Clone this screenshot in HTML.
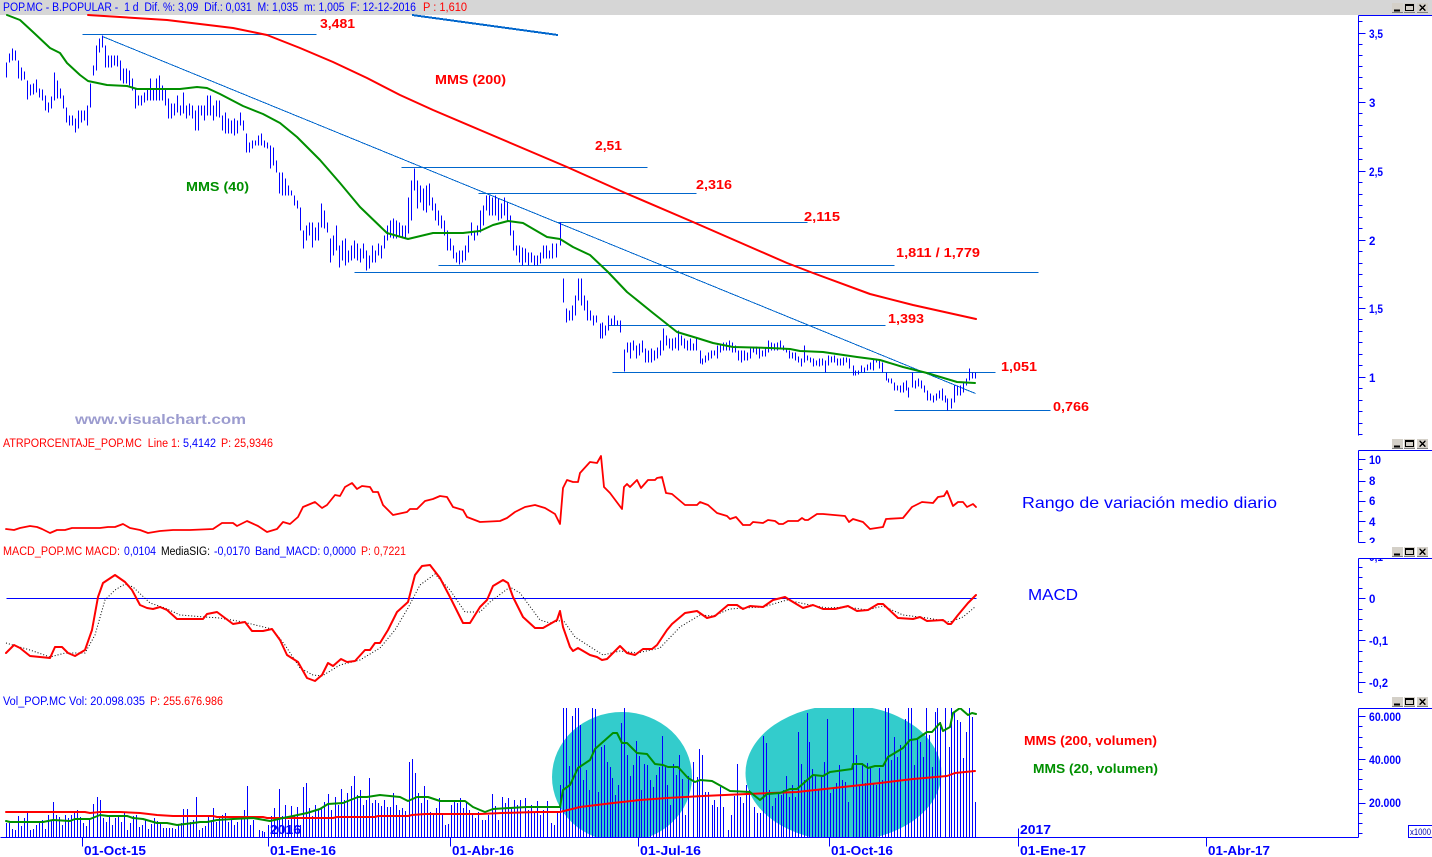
<!DOCTYPE html>
<html><head><meta charset="utf-8"><title>POP.MC</title>
<style>
html,body{margin:0;padding:0;background:#fff;overflow:hidden}
svg{display:block;position:absolute;left:0;top:0}
text{font-family:"Liberation Sans",sans-serif}
.b{font-weight:bold}
.crisp{shape-rendering:crispEdges}
.l{fill:none;stroke-linejoin:round;stroke-linecap:round}
</style></head><body>
<svg width="1432" height="857" viewBox="0 0 1432 857" xmlns="http://www.w3.org/2000/svg">
<defs>
<clipPath id="vc"><rect x="0" y="708" width="1358" height="129"/></clipPath>
<clipPath id="atrc"><rect x="1360" y="450" width="72" height="93"/></clipPath>
<clipPath id="macc"><rect x="1360" y="558" width="72" height="136"/></clipPath>
<g id="btn"><rect x="1392" y="1" width="11" height="10" fill="#d4d0c8"/><rect x="1404" y="1" width="11" height="10" fill="#d4d0c8"/><rect x="1417" y="1" width="11" height="10" fill="#d4d0c8"/><path d="M1392 10.5H1403M1404 10.5H1415M1417 10.5H1428" stroke="#808080" fill="none"/><path d="M1394 8H1400M1394 9H1400" stroke="#000" stroke-width="1" fill="none"/><rect x="1405.5" y="2.5" width="8" height="6" fill="none" stroke="#000"/><path d="M1405 3.5H1414" stroke="#000" fill="none"/><path d="M1419.5 3L1425.5 8.5M1425.5 3L1419.5 8.5" stroke="#000" stroke-width="1.4" fill="none"/></g>
</defs>
<rect width="1432" height="857" fill="#fff"/>
<rect x="0" y="0" width="1432" height="15" fill="#d6d6d6"/>
<text x="3" y="11" font-size="11.5" fill="#0000ff" textLength="413" lengthAdjust="spacingAndGlyphs" xml:space="preserve">POP.MC - B.POPULAR -  1 d  Dif. %: 3,09  Dif.: 0,031  M: 1,035  m: 1,005  F: 12-12-2016</text>
<text x="423" y="11" font-size="11.5" fill="#ff0000" textLength="44" lengthAdjust="spacingAndGlyphs">P : 1,610</text>

<!-- horizontal and trend lines -->
<g stroke="#0066cc" stroke-width="1" class="crisp" fill="none" transform="translate(.5,.5)">
<path d="M82 34H316M401 167H647M478 193H696M556 222H807M438 265H894M354 272H1038M608 325H885M612 372H995M894 410H1050"/>
<path d="M102 36L975 393"/>
</g>
<path d="M412 15L558 35" stroke="#0066cc" stroke-width="2" fill="none" class="crisp"/>

<!-- price bars -->
<path class="crisp" transform="translate(.5,.5)" stroke="#0000ff" stroke-width="1" fill="none" d="M6 62V77M9 53V62M12 48V60M15 50V60M18 60V78M21 67V80M24 71V79M27 80V99M30 84V95M33 83V94M36 79V92M39 88V97M42 89V100M45 95V110M48 102V112M51 96V108M54 72V100M57 80V98M60 88V98M63 95V108M66 107V122M69 115V125M72 115V125M75 118V132M78 110V128M81 110V122M84 110V120M87 105V125M90 83V107M93 65V75M96 45V70M99 38V52M102 35V47M105 45V67M108 55V67M111 55V67M114 55V65M117 55V66M120 60V80M123 68V83M126 68V83M129 70V85M132 78V90M135 88V108M138 95V105M141 95V105M144 92V102M147 88V100M150 78V100M153 88V100M156 78V100M159 75V100M162 85V100M165 88V105M168 98V118M171 103V118M174 103V115M177 95V112M180 105V115M183 92V113M186 105V118M189 103V115M192 105V118M195 110V130M198 105V130M201 105V115M204 105V120M207 95V115M210 95V115M213 105V120M216 100V116M219 100V117M222 115V130M225 112V133M228 118V133M231 120V133M234 118V135M237 120V133M240 112V125M243 120V130M246 133V152M249 142V152M252 140V148M255 140V145M258 135V145M261 133V145M264 140V147M267 142V148M270 145V168M273 147V165M276 160V172M279 172V193M282 172V195M285 178V195M288 185V195M291 190V195M294 195V205M297 200V208M300 207V230M303 230V248M306 225V240M309 222V235M312 222V247M315 227V240M318 222V240M321 203V227M324 210V228M327 222V232M330 238V262M333 235V255M336 225V250M339 245V267M342 240V260M345 238V265M348 250V262M351 245V260M354 240V258M357 243V260M360 248V262M363 243V258M366 250V270M369 255V268M372 245V262M375 250V262M378 243V255M381 245V258M384 235V248M387 225V240M390 220V237M393 218V238M396 220V238M399 222V236M402 225V238M405 225V238M408 197V233M411 180V220M414 168V190M417 180V208M420 185V202M423 188V210M426 185V212M429 183V205M432 197V210M435 203V220M438 210V225M441 215V228M444 220V235M447 230V250M450 238V250M453 245V258M456 252V262M459 250V264M462 250V262M465 245V260M468 235V252M471 222V235M474 230V240M477 225V235M480 210V232M483 205V225M486 195V210M489 195V215M492 197V215M495 195V215M498 198V220M501 203V218M504 197V215M507 202V220M510 215V235M513 230V250M516 245V255M519 245V262M522 247V265M525 248V262M528 252V265M531 252V262M534 255V265M537 255V265M540 252V263M543 245V258M546 245V258M549 250V258M552 243V258M556 243V257M560 222V245M563 278V302M566 308V322M569 310V320M572 305V320M575 295V315M578 278V300M581 278V305M584 295V310M587 300V320M590 310V320M593 315V325M596 315V322M600 323V338M602 322V338M605 325V335M608 315V330M611 318V325M614 315V325M617 320V325M620 320V332M624 349V371M627 342V352M630 342V358M633 340V350M636 345V358M639 343V355M642 340V352M645 348V362M648 350V362M651 348V362M654 350V360M657 347V358M660 340V355M663 328V350M666 335V345M669 338V348M672 338V350M675 337V348M678 330V350M681 335V345M684 338V348M687 340V350M690 338V350M693 343V350M696 337V350M700 350V363M702 358V364M705 355V362M708 352V360M711 350V358M714 350V355M717 345V358M720 343V352M723 342V350M726 342V350M729 340V350M732 342V352M735 345V352M738 350V360M741 350V362M744 350V360M747 352V360M750 348V358M753 348V352M756 346V354M759 348V358M762 350V356M765 348V356M768 340V352M771 342V350M774 343V350M777 342V350M780 340V348M783 345V350M786 348V352M789 350V358M792 352V358M795 352V360M798 356V362M801 358V366M804 345V362M807 355V360M810 357V362M813 358V366M816 360V365M819 358V366M822 358V365M825 360V372M828 355V365M831 356V362M834 355V362M837 358V365M840 358V365M843 357V365M846 357V362M849 358V368M853 365V375M855 370V375M858 370V374M861 365V372M864 367V372M867 364V370M870 362V369M873 358V370M876 358V362M879 360V368M882 362V372M886 372V380M888 378V382M891 378V383M894 382V390M897 385V390M900 385V392M903 382V392M906 380V390M908 387V397M912 372V387M915 380V388M918 378V386M921 380V388M924 385V392M927 390V400M930 393V400M933 395V402M936 393V400M939 390V398M942 388V400M945 395V402M947 398V410M951 398V408M954 385V402M957 385V395M960 385V395M963 382V392M966 378V385M969 368V380M972 372V378M975 372V378"/>

<!-- MMS 200 & 40 -->
<polyline class="l" stroke="#ff0000" stroke-width="2" points="88,15 167,20 233,28 267,35 300,48 333,62 367,78 400,95 433,110 480,130 527,150 567,167 623,192 693,222 787,263 813,273 870,294 913,305 976,319"/>
<polyline class="l" stroke="#008f00" stroke-width="2" points="7,15 20,20 33,32 50,48 60,53 67,63 80,75 88,81 107,85 127,86 137,89 170,89 180,89 197,87 207,88 220,94 243,106 263,114 280,123 297,137 320,160 340,183 360,207 387,233 408,239 433,233 463,233 480,231 493,225 508,221 523,223 547,237 560,239 573,247 590,255 608,272 627,292 653,313 677,332 697,338 713,343 733,347 770,348 790,349 800,351 823,352 857,357 880,360 903,367 927,373 957,382 975,383"/>

<!-- main labels -->
<g class="b" font-size="12.5" fill="#ff0000">
<text x="320" y="28" textLength="35" lengthAdjust="spacingAndGlyphs">3,481</text>
<text x="435" y="84" textLength="71" lengthAdjust="spacingAndGlyphs">MMS (200)</text>
<text x="595" y="150" textLength="27" lengthAdjust="spacingAndGlyphs">2,51</text>
<text x="696" y="189" textLength="36" lengthAdjust="spacingAndGlyphs">2,316</text>
<text x="804" y="221" textLength="36" lengthAdjust="spacingAndGlyphs">2,115</text>
<text x="896" y="257" textLength="84" lengthAdjust="spacingAndGlyphs">1,811 / 1,779</text>
<text x="888" y="323" textLength="36" lengthAdjust="spacingAndGlyphs">1,393</text>
<text x="1001" y="371" textLength="36" lengthAdjust="spacingAndGlyphs">1,051</text>
<text x="1053" y="411" textLength="36" lengthAdjust="spacingAndGlyphs">0,766</text>
</g>
<text class="b" x="186" y="191" font-size="12.5" fill="#008f00" textLength="63" lengthAdjust="spacingAndGlyphs">MMS (40)</text>
<text class="b" x="75" y="424" font-size="14" fill="#9c9ccf" textLength="171" lengthAdjust="spacingAndGlyphs">www.visualchart.com</text>

<!-- ATR -->
<g font-size="11.5">
<text x="3" y="447" fill="#ff0000" textLength="177" lengthAdjust="spacingAndGlyphs" xml:space="preserve">ATRPORCENTAJE_POP.MC  Line 1:</text>
<text x="183" y="447" fill="#0000ff" textLength="33" lengthAdjust="spacingAndGlyphs">5,4142</text>
<text x="221" y="447" fill="#ff0000" textLength="52" lengthAdjust="spacingAndGlyphs">P: 25,9346</text>
</g>
<polyline class="l" stroke="#ff0000" stroke-width="1.8" points="6,529 14,530 20,528 30,526 37,527 42,529 50,533 57,530 65,530 72,528 90,528 100,528 108,527 115,527 123,524 130,528 140,530 148,533 160,531 173,530 190,530 213,529 222,523 233,523 237,526 247,521 258,526 267,532 277,529 283,522 290,524 298,517 303,507 315,502 322,508 327,505 335,495 340,496 345,487 352,483 357,489 362,486 370,487 373,492 378,492 383,505 393,515 407,512 410,509 417,509 425,501 433,499 440,496 447,497 453,507 463,510 467,517 480,522 500,521 507,518 515,512 525,507 535,505 545,508 555,514 560,524 563,488 567,480 573,482 578,482 580,473 590,462 597,463 601,456 604,487 610,493 622,509 624,487 627,484 630,487 637,480 641,488 648,480 655,480 657,478 662,477 666,493 672,494 685,505 697,505 700,502 708,505 717,513 727,516 730,519 736,517 743,525 750,525 753,522 763,523 768,520 775,521 779,524 783,524 788,521 798,521 802,518 805,520 808,520 817,514 823,514 845,516 849,522 853,519 863,522 870,529 883,527 886,519 903,518 912,507 922,502 933,503 938,497 944,496 947,491 953,506 958,502 963,502 967,507 973,504 976,507"/>
<text x="1022" y="508" font-size="16" fill="#0000ff" textLength="255" lengthAdjust="spacingAndGlyphs">Rango de variación medio diario</text>

<!-- MACD -->
<g font-size="11.5">
<text x="3" y="555" fill="#ff0000" textLength="117" lengthAdjust="spacingAndGlyphs">MACD_POP.MC MACD:</text>
<text x="124" y="555" fill="#0000ff" textLength="32" lengthAdjust="spacingAndGlyphs">0,0104</text>
<text x="161" y="555" fill="#000000" textLength="49" lengthAdjust="spacingAndGlyphs">MediaSIG:</text>
<text x="214" y="555" fill="#0000ff" textLength="36" lengthAdjust="spacingAndGlyphs">-0,0170</text>
<text x="255" y="555" fill="#0000ff" textLength="101" lengthAdjust="spacingAndGlyphs">Band_MACD: 0,0000</text>
<text x="361" y="555" fill="#ff0000" textLength="45" lengthAdjust="spacingAndGlyphs">P: 0,7221</text>
</g>
<path d="M6 598H976" stroke="#0000ff" stroke-width="1" class="crisp" transform="translate(.5,.5)"/>
<polyline fill="none" stroke="#000" stroke-width="1" stroke-dasharray="1 2" points="6,643 30,650 50,657 65,653 85,653 95,635 105,600 115,590 125,584 133,587 150,603 165,608 180,615 205,617 220,618 243,622 272,629 285,645 300,668 313,675 322,676 340,665 360,660 380,648 395,630 408,608 420,585 435,574 450,590 465,612 480,612 490,602 510,587 520,593 540,620 550,623 563,620 575,637 603,655 620,651 637,653 660,648 680,627 700,615 713,616 730,609 743,608 763,607 787,600 810,605 827,608 847,607 867,610 883,606 903,615 927,618 950,622 963,617 975,607"/>
<polyline class="l" stroke="#ff0000" stroke-width="2" points="6,653 14,645 20,648 30,656 50,658 55,647 62,647 68,653 75,656 85,650 92,630 98,597 103,583 115,575 125,582 132,590 140,605 147,608 153,609 160,607 167,610 177,619 203,619 207,614 217,612 233,624 245,622 252,631 263,631 272,629 280,640 287,655 298,662 307,678 315,681 322,675 328,663 333,666 341,659 347,662 355,661 365,650 370,650 375,643 380,643 388,630 397,612 408,602 415,575 422,566 430,565 440,578 450,597 463,623 470,623 480,607 487,600 493,586 503,580 508,583 513,597 523,617 535,628 543,628 557,620 560,611 563,627 570,647 573,651 578,648 590,655 597,657 602,660 607,659 620,646 627,653 635,655 643,649 652,649 657,645 667,630 672,624 685,613 697,611 707,618 715,616 728,605 737,605 743,609 750,606 763,607 773,600 785,597 793,602 803,608 813,605 823,609 835,609 848,606 857,611 868,610 878,604 883,604 898,618 913,619 920,617 927,621 943,620 948,624 951,624 958,615 968,603 976,595"/>
<text x="1028" y="600" font-size="16" fill="#0000ff" textLength="50" lengthAdjust="spacingAndGlyphs">MACD</text>

<!-- Volume -->
<g font-size="11.5">
<text x="3" y="705" fill="#0000ff" textLength="142" lengthAdjust="spacingAndGlyphs">Vol_POP.MC Vol: 20.098.035</text>
<text x="150" y="705" fill="#ff0000" textLength="73" lengthAdjust="spacingAndGlyphs">P: 255.676.986</text>
</g>
<g clip-path="url(#vc)">
<ellipse cx="622" cy="777" rx="70" ry="65" fill="#33cccc"/>
<ellipse cx="843.5" cy="773" rx="98" ry="68" fill="#33cccc"/>
<path class="crisp" transform="translate(.5,0)" stroke="#0000ff" stroke-width="1" fill="none" d="M6 837V823M9 837V823M12 837V829M15 837V830M18 837V816M21 837V826M24 837V818M27 837V812M30 837V830M33 837V829M36 837V825M39 837V823M42 837V820M45 837V829M48 837V815M51 837V820M53 837V802M56 837V815M59 837V817M62 837V825M65 837V815M68 837V818M71 837V815M74 837V812M77 837V810M80 837V817M83 837V823M86 837V826M89 837V820M93 837V804M97 837V797M100 837V800M103 837V818M106 837V822M109 837V815M112 837V825M115 837V818M118 837V815M121 837V822M124 837V812M127 837V830M130 837V823M133 837V816M136 837V815M139 837V827M142 837V825M145 837V820M148 837V829M151 837V824M154 837V818M157 837V821M160 837V824M163 837V828M166 837V828M169 837V828M172 837V828M175 837V829M178 837V825M181 837V823M183 837V809M187 837V809M190 837V822M193 837V820M196 837V797M199 837V830M202 837V828M205 837V826M208 837V815M211 837V821M213 837V808M216 837V822M219 837V818M222 837V815M225 837V813M228 837V822M231 837V820M234 837V825M237 837V822M241 837V818M244 837V810M247 837V786M250 837V825M253 837V820M259 837V830M262 837V831M264 837V832M268 837V825M271 837V816M274 837V808M277 837V818M279 837V789M282 837V816M285 837V805M288 837V820M291 837V806M294 837V815M297 837V807M300 837V825M303 837V787M306 837V783M309 837V808M312 837V816M315 837V805M318 837V810M321 837V807M324 837V802M328 837V794M331 837V810M335 837V797M338 837V805M341 837V789M344 837V800M347 837V793M351 837V786M354 837V776M357 837V795M360 837V790M363 837V805M366 837V800M369 837V778M372 837V803M375 837V800M378 837V803M381 837V806M384 837V800M387 837V807M390 837V807M393 837V793M396 837V805M399 837V810M402 837V808M405 837V811M409 837V762M412 837V759M415 837V773M418 837V793M421 837V803M424 837V786M427 837V800M430 837V812M433 837V815M436 837V808M439 837V798M442 837V815M445 837V825M448 837V824M451 837V805M454 837V802M457 837V803M460 837V798M463 837V808M466 837V802M469 837V810M472 837V813M475 837V818M478 837V812M482 837V820M485 837V820M488 837V815M492 837V794M495 837V806M498 837V820M502 837V797M505 837V803M508 837V798M511 837V808M514 837V800M517 837V805M520 837V800M525 837V798M528 837V810M531 837V805M534 837V812M537 837V801M540 837V815M543 837V810M547 837V801M551 837V823M554 837V825M557 837V812M560 837V785M563 837V708M566 837V708M569 837V766M572 837V716M575 837V708M578 837V708M580 837V725M583 837V780M586 837V770M589 837V790M592 837V708M595 837V709M598 837V792M601 837V747M604 837V745M607 837V762M610 837V767M612 837V778M615 837V795M618 837V785M621 837V723M624 837V708M627 837V755M630 837V776M633 837V765M636 837V741M639 837V756M641 837V790M644 837V764M647 837V765M650 837V780M653 837V787M656 837V775M659 837V767M662 837V736M665 837V767M667 837V785M670 837V805M673 837V764M676 837V775M679 837V755M682 837V779M685 837V815M688 837V776M693 837V762M697 837V777M699 837V749M702 837V755M705 837V792M708 837V792M712 837V805M714 837V800M717 837V807M720 837V787M723 837V807M728 837V830M731 837V815M734 837V796M737 837V764M740 837V797M743 837V803M746 837V785M749 837V790M754 837V807M757 837V813M760 837V813M763 837V736M766 837V743M769 837V790M772 837V806M775 837V798M778 837V793M781 837V795M783 837V790M786 837V776M789 837V797M792 837V785M795 837V797M798 837V732M801 837V764M804 837V780M807 837V713M809 837V742M812 837V769M815 837V775M818 837V790M821 837V777M824 837V762M827 837V719M830 837V793M833 837V788M836 837V783M839 837V765M842 837V780M845 837V782M848 837V802M853 837V708M856 837V755M859 837V785M862 837V763M865 837V783M867 837V763M870 837V768M873 837V783M876 837V785M879 837V768M882 837V780M885 837V708M888 837V708M891 837V760M894 837V737M897 837V757M900 837V745M905 837V719M908 837V708M911 837V708M914 837V765M917 837V738M920 837V742M923 837V757M926 837V708M929 837V735M932 837V767M935 837V712M937 837V708M940 837V722M945 837V708M949 837V747M951 837V708M954 837V712M957 837V720M960 837V722M963 837V758M966 837V732M969 837V708M972 837V717M975 837V802"/>
<polyline class="l" stroke="#ff0000" stroke-width="2" points="6,812 85,812 90,813 100,812 120,812 140,813 157,815 173,816 213,816 217,817 263,817 267,818 333,818 337,817 375,817 378,816 408,816 412,815 425,814 480,814 502,813 537,812 560,812 580,807 613,803 640,800 667,798 703,796 747,794 797,792 843,787 880,783 913,779 947,776 955,773 975,771"/>
<polyline class="l" stroke="#008f00" stroke-width="2" points="6,821 10,822 43,822 53,820 70,821 75,819 90,819 100,815 108,816 127,816 133,818 143,819 157,823 167,823 177,825 193,823 200,822 207,822 217,820 233,819 253,818 270,821 283,818 293,816 307,813 320,809 328,804 343,803 358,797 367,797 380,795 400,797 408,801 417,797 428,797 440,801 465,801 473,807 480,810 485,812 493,809 510,808 527,807 560,807 563,790 570,785 578,768 590,760 595,749 613,733 617,733 622,743 627,743 637,753 647,754 655,764 663,765 668,767 678,767 688,778 695,782 700,780 712,781 730,791 750,792 760,800 767,794 780,793 790,789 797,789 813,775 823,776 830,772 852,769 853,764 862,764 868,768 875,766 883,766 888,757 903,748 910,740 917,739 927,732 932,732 940,723 943,731 950,727 953,713 960,708 968,715 972,713 976,714"/>
</g>
<path d="M0 837H1358" stroke="#0000ff" stroke-width="1" class="crisp" transform="translate(.5,.5)"/>
<g class="b" font-size="12.5">
<text x="1024" y="745" fill="#ff0000" textLength="133" lengthAdjust="spacingAndGlyphs">MMS (200, volumen)</text>
<text x="1033" y="773" fill="#008f00" textLength="125" lengthAdjust="spacingAndGlyphs">MMS (20, volumen)</text>
</g>

<!-- date axis -->
<path class="crisp" transform="translate(.5,.5)" stroke="#0000ff" stroke-width="1" d="M82 837V846M268 828V846M450 837V846M638 837V846M829 837V846M1018 828V846M1206 837V846"/>
<g class="b" font-size="12.5" fill="#0000ff">
<text x="84" y="855" textLength="62" lengthAdjust="spacingAndGlyphs">01-Oct-15</text>
<text x="270" y="855" textLength="66" lengthAdjust="spacingAndGlyphs">01-Ene-16</text>
<text x="452" y="855" textLength="62" lengthAdjust="spacingAndGlyphs">01-Abr-16</text>
<text x="640" y="855" textLength="61" lengthAdjust="spacingAndGlyphs">01-Jul-16</text>
<text x="831" y="855" textLength="62" lengthAdjust="spacingAndGlyphs">01-Oct-16</text>
<text x="1020" y="855" textLength="66" lengthAdjust="spacingAndGlyphs">01-Ene-17</text>
<text x="1208" y="855" textLength="62" lengthAdjust="spacingAndGlyphs">01-Abr-17</text>
<text x="270" y="834" font-size="13" textLength="31" lengthAdjust="spacingAndGlyphs">2016</text>
<text x="1020" y="834" font-size="13" textLength="31" lengthAdjust="spacingAndGlyphs">2017</text>
</g>

<!-- right axes -->
<path class="crisp" transform="translate(.5,.5)" stroke="#0000ff" stroke-width="1" fill="none" d="M1358 15H1432M1358 15V435
M1358 21H1362M1358 33H1365M1358 44H1362M1358 55H1362M1358 66H1362M1358 77H1362M1358 88H1362M1358 102H1365M1358 113H1362M1358 125H1362M1358 136H1362M1358 148H1362M1358 159H1362M1358 171H1365M1358 182H1362M1358 194H1362M1358 205H1362M1358 217H1362M1358 228H1362M1358 240H1365M1358 251H1362M1358 263H1362M1358 274H1362M1358 286H1362M1358 297H1362M1358 308H1365M1358 319H1362M1358 331H1362M1358 342H1362M1358 354H1362M1358 365H1362M1358 377H1365M1358 388H1362M1358 400H1362M1358 411H1362M1358 423H1362M1358 434H1362
M1358 450H1432M1358 450V542M1358 459H1365M1358 469H1362M1358 481H1365M1358 491H1362M1358 501H1365M1358 511H1362M1358 521H1365M1358 531H1362M1358 542H1365
M1358 558H1432M1358 558V692M1358 567H1362M1358 577H1362M1358 588H1362M1358 598H1365M1358 609H1362M1358 619H1362M1358 630H1362M1358 640H1365M1358 651H1362M1358 661H1362M1358 672H1362M1358 682H1365M1358 692H1362
M1358 708H1432M1358 708V837M1358 716H1365M1358 726H1362M1358 737H1362M1358 747H1362M1358 759H1365M1358 769H1362M1358 779H1362M1358 789H1362M1358 803H1365M1358 813H1362M1358 823H1362M1358 833H1362"/>
<g class="b" font-size="11.5" fill="#0000ff">
<text x="1369" y="38" textLength="14" lengthAdjust="spacingAndGlyphs">3,5</text>
<text x="1369" y="107">3</text>
<text x="1369" y="176" textLength="14" lengthAdjust="spacingAndGlyphs">2,5</text>
<text x="1369" y="245">2</text>
<text x="1369" y="313" textLength="14" lengthAdjust="spacingAndGlyphs">1,5</text>
<text x="1369" y="382">1</text>
<text x="1369" y="464" textLength="12" lengthAdjust="spacingAndGlyphs">10</text>
<text x="1369" y="485">8</text>
<text x="1369" y="505">6</text>
<text x="1369" y="526">4</text>
<text x="1369" y="546" clip-path="url(#atrc)">2</text>
<text x="1369" y="561" clip-path="url(#macc)" textLength="14" lengthAdjust="spacingAndGlyphs">0,1</text>
<text x="1369" y="603">0</text>
<text x="1369" y="645" textLength="19" lengthAdjust="spacingAndGlyphs">-0,1</text>
<text x="1369" y="687" textLength="19" lengthAdjust="spacingAndGlyphs">-0,2</text>
<text x="1369" y="721" textLength="32" lengthAdjust="spacingAndGlyphs">60.000</text>
<text x="1369" y="764" textLength="32" lengthAdjust="spacingAndGlyphs">40.000</text>
<text x="1369" y="807" textLength="32" lengthAdjust="spacingAndGlyphs">20.000</text>
</g>
<rect x="1408.5" y="825.5" width="24" height="12" fill="#fff" stroke="#0000ff" stroke-width="1" class="crisp"/>
<text x="1410" y="835" font-size="9" fill="#0000aa" textLength="21" lengthAdjust="spacingAndGlyphs">x1000</text>

<!-- window buttons -->
<g class="crisp">
<use href="#btn" transform="translate(0,2)"/>
<use href="#btn" transform="translate(0,438)"/>
<use href="#btn" transform="translate(0,546)"/>
<use href="#btn" transform="translate(0,696)"/>
</g>
</svg>
</body></html>
